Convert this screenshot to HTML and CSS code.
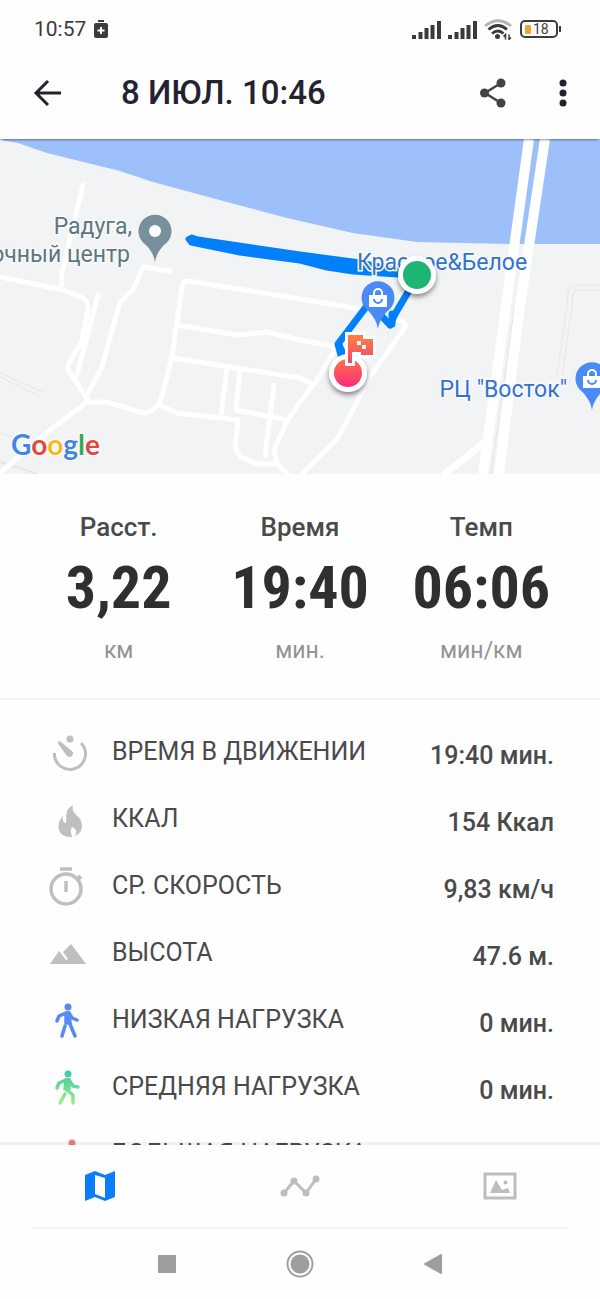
FILE: index.html
```html
<!DOCTYPE html>
<html lang="ru">

<head>
    <meta charset="UTF-8">
    <meta name="viewport" content="width=device-width, initial-scale=1.0">
    <title>8 ИЮЛ. 10:46</title>
    <link rel="stylesheet" href="styles.css">
</head>

<body>
    <div class="app">
        <!-- phone status bar -->
        <div class="status">
            <span>10:57</span>
            <svg width="14" height="18" viewBox="0 0 14 18">
                <path d="M4 0h6v2H4z" fill="#3c3c3e" />
                <rect y="3" width="14" height="15" rx="2" fill="#3c3c3e" />
                <path d="M7 7v7M3.500 10.500h7" stroke="#fff" stroke-width="2" />
            </svg>
            <div class="status-right">
                <svg width="30" height="19" viewBox="0 0 30 19" stroke="#3a3a3a" stroke-width="4">
                    <path d="M2 19v-4M8.500 19v-7M14.500 19v-11M20.500 19v-14M27 19v-18" />
                </svg>
                <svg width="30" height="19" viewBox="0 0 30 19" stroke="#3a3a3a" stroke-width="4">
                    <path d="M2 19v-4M8.500 19v-7M14.500 19v-11M20.500 19v-14M27 19v-18" />
                </svg>
                <svg width="28" height="21" viewBox="0 0 28 21" fill="none" stroke="#3a3a3a" stroke-width="2.800">
                    <path d="M1 7Q14-3.500 27 7" stroke="#b5b5b5" />
                    <path d="M4.500 10.500Q14 2.500 23 10.500M8 14.500Q14 9.500 19.500 14.500" />
                    <circle cx="13.500" cy="17.500" r="2.500" fill="#3a3a3a" stroke="none" />
                    <path d="M21.500 20.500v-5l-2 2M25 15.500v5l2-2" stroke-width="1.500" />
                </svg>
                <div class="battery"><i></i>18</div>
            </div>
        </div>

        <header class="header">
            <button class="icon-btn" aria-label="Назад">
                <svg width="28" height="28" viewBox="0 0 28 28" fill="none" stroke="#25222f" stroke-width="3">
                    <path d="M15 2 3 14l12 12M2.500 14H28" />
                </svg>
            </button>
            <h1>8 ИЮЛ. 10:46</h1>
            <button class="icon-btn share" aria-label="Поделиться">
                <svg width="26" height="30" viewBox="0 0 26 30" fill="#434343">
                    <path d="M21 5 5 15l16 10" fill="none" stroke="#434343" stroke-width="2.500" />
                    <circle cx="21" cy="5" r="4.500" />
                    <circle cx="4.500" cy="15" r="4.500" />
                    <circle cx="21" cy="25" r="4.500" />
                </svg>
            </button>
            <button class="icon-btn" aria-label="Меню">
                <svg width="8" height="28" viewBox="0 0 8 28" fill="#25222f">
                    <circle cx="4" cy="4" r="3.500" />
                    <circle cx="4" cy="14" r="3.500" />
                    <circle cx="4" cy="24" r="3.500" />
                </svg>
            </button>
        </header>

        <svg class="map" viewBox="0 139 600 335" preserveAspectRatio="xMidYMid slice">
            <defs>
                <linearGradient id="finish" x1="0" y1="0" x2="0" y2="1">
                    <stop offset="0" stop-color="#ff7048" />
                    <stop offset="1" stop-color="#fb2d7a" />
                </linearGradient>
                <linearGradient id="flag" x1="0" y1="0" x2="0" y2="1">
                    <stop offset="0" stop-color="#ff8040" />
                    <stop offset="1" stop-color="#f0456e" />
                </linearGradient>
                <filter id="shadow" x="-30%" y="-30%" width="160%" height="170%">
                    <feDropShadow dx="0" dy="3" stdDeviation="2.500" flood-opacity=".45" />
                </filter>
                <g id="shop">
                    <path d="M0 31C-1 24-5 18-9 13.500A16.500 16.500 0 1 1 9 13.500C5 18 1 24 0 31z" fill="#4a8af4" />
                    <path d="M-9-3H9V9H-9z" fill="#fff" />
                    <path d="M-4-3v-2a4 4 0 0 1 8 0v2" fill="none" stroke="#fff" stroke-width="2" />
                    <path d="M-4 1a4 4 0 0 0 8 0" fill="none" stroke="#4a8af4" stroke-width="2" />
                </g>
            </defs>
            <path d="M0 139h600v335H0z" fill="#f1f3f4" />
            <path d="M0 139V140L18 143 47 153 120 171 153 182 227 202 287 218 353 233 417 242 510 244H600V139z" fill="#9dbffa" />

            <!-- faint paths -->
            <g fill="none" stroke="#e4e6e8" stroke-width="1">
                <path d="M0 373 43 392M0 377 41 397M0 433l14 4M557 376l10-70 1-14q2-7 9-7h23M562 376l10-70 1-12q1-4 5-4h22" />
                <path d="M0 462 38 474" stroke-width="2" />
            </g>

            <!-- streets -->
            <g class="street">
                <path d="M83 185 62 272 61 288M0 277 63 290 83 298Q89 302 88 310L82 340 68 365Q67 370 71 374L88 400" />
                <path d="M98 295 77 375M170 271 143 267 133 290 120 302 102 367 87 395M87 395V402" />
                <path d="M0 473 50 430 87 402H107L143 413Q151 412 155 408L160 403 172 357 182 287Q183 281 189 281L300 299 360 309" />
                <path d="M177 325 237 335 267 332 300 340 337 347M173 358 300 378 312 384" />
                <path d="M159 405 177 413 238 420 235 447 240 457 258 464H277L287 473M227 368 221 415M240 370 236 410 287 420M274 385 265 455" />
                <path d="M277 464 274 450 287 421 300 402 317 380 335 350M303 473 338 438 370 377 405 327Q406 321 398 320" />
                <path d="M445 474 485 442" stroke-width="7" />
            </g>
            <path d="M533 244 514 310 491 474" class="median" />
            <path d="M529 139 506 306 483 474M545 139 520 306 499 474" class="highway" />

            <!-- run track -->
            <path d="M188 239 192 237 198 239 300 254 360 262 412 273V276L353 272 327 268 300 261 240 253 191 243z" fill="#0080fb" stroke="#0080fb" stroke-width="5" stroke-linejoin="round" />
            <path d="M417 277 395 314 390 325 378 312M366 307 338 344 341 355" class="track" />
            <path d="M392 314V324M339 345 342 352" class="track" />

            <path d="M155 262C154 255 150 249 146 245A16.500 16.500 0 1 1 164 245C160 249 156 255 155 262z" fill="#78909b" />
            <circle cx="155" cy="231" r="6" fill="#fff" />
            <use href="#shop" x="378" y="298" />
            <use href="#shop" x="592" y="379" />

            <text x="132" y="234" class="place grey">Радуга,</text>
            <text x="130" y="262" class="place grey">очный центр</text>
            <text x="357" y="270" class="place start">Красное&amp;Белое</text>
            <text x="567" y="397" class="place">РЦ "Восток"</text>

            <circle cx="417" cy="275" r="19" fill="#fff" filter="url(#shadow)" />
            <circle cx="417" cy="275" r="14" fill="#1eb574" />
            <circle cx="348" cy="373" r="19" fill="#fff" filter="url(#shadow)" />
            <circle cx="348" cy="373" r="14" fill="url(#finish)" />
            <path d="M348 335H363V339H373V355H361V352H352V363H348z" fill="#fff" stroke="#fff" stroke-width="6" />
            <path d="M348 335H363V339H373V355H361V352H352V363H348z" fill="url(#flag)" />
            <path d="M357 341h4v4h-4zM362 345h4v4h-4z" fill="#fff" />

            <text x="11" y="455" class="google"><tspan fill="#4285e8">G</tspan><tspan fill="#dd4b3e">o</tspan><tspan fill="#f0bd20">o</tspan><tspan fill="#4285e8">g</tspan><tspan fill="#3aa757">l</tspan><tspan fill="#dd4b3e">e</tspan></text>
        </svg>

        <section class="stats">
            <div class="stat">
                <h2>Расст.</h2>
                <strong>3,22</strong>
                <span>км</span>
            </div>
            <div class="stat">
                <h2>Время</h2>
                <strong>19:40</strong>
                <span>мин.</span>
            </div>
            <div class="stat">
                <h2>Темп</h2>
                <strong>06:06</strong>
                <span>мин/км</span>
            </div>
        </section>

        <dl class="details">
            <div class="row">
                <dt>
                    <svg width="40" height="40" viewBox="0 0 40 40" fill="none" stroke="#bfbfbf" stroke-width="3">
                        <path d="M6.500 21A15.500 15.500 0 1 0 33 11" />
                        <circle cx="22" cy="7" r="3.500" fill="#bfbfbf" stroke="none" />
                        <path d="M11 9Q9 11 11 13L19 24Q22 26 24 24 26 21 24 19L13 10Q12 9 11 9z" fill="#bfbfbf" stroke="none" />
                    </svg>
                    ВРЕМЯ В ДВИЖЕНИИ
                </dt>
                <dd>19:40 мин.</dd>
            </div>
            <div class="row">
                <dt>
                    <svg width="40" height="40" viewBox="0 0 40 40" fill="#bfbfbf">
                        <path d="M25 6C23 13 28 15 32 20 36 27 34 34 27 37 30 32 27 29 24 28 22 31 23 34 24 38 13 39 9 31 11 24 12 20 14 18 15 17 14 22 16 24 18 24 19 17 16 11 25 6z" />
                    </svg>
                    ККАЛ
                </dt>
                <dd>154 Ккал</dd>
            </div>
            <div class="row">
                <dt>
                    <svg width="40" height="40" viewBox="0 0 40 40" fill="none" stroke="#bfbfbf" stroke-width="3.500">
                        <circle cx="18" cy="23" r="15" />
                        <path d="M12 3H24M18 15V26M30 10l3 3" />
                    </svg>
                    СР. СКОРОСТЬ
                </dt>
                <dd>9,83 км/ч</dd>
            </div>
            <div class="row">
                <dt>
                    <svg width="40" height="40" viewBox="0 0 40 40" fill="#bfbfbf">
                        <path d="M2 31 11 18 18 27 20 26 15 19 23 11 38 31z" />
                    </svg>
                    ВЫСОТА
                </dt>
                <dd>47.6 м.</dd>
            </div>
            <div class="row">
                <dt>
                    <svg width="40" height="40" viewBox="0 -2 40 40" fill="none" stroke="#568af0" stroke-width="3.500" stroke-linecap="round" stroke-linejoin="round">
                        <circle cx="20" cy="5" r="3.500" fill="#568af0" stroke="none" />
                        <path d="M18 11 11 14 9 19M21 11 24 16 29 18M17 24 14 34M22 22 27 34" />
                        <path d="M18 11H21L22 21H18z" fill="#568af0" />
                    </svg>
                    НИЗКАЯ НАГРУЗКА
                </dt>
                <dd>0 мин.</dd>
            </div>
            <div class="row">
                <dt>
                    <svg width="40" height="40" viewBox="0 -2 40 40" fill="none" stroke="url(#mid)" stroke-width="3.500" stroke-linecap="round" stroke-linejoin="round">
                        <linearGradient id="mid" gradientUnits="userSpaceOnUse" x1="0" y1="2" x2="0" y2="36">
                            <stop offset="0" stop-color="#3cc8a8" />
                            <stop offset="1" stop-color="#a0f080" />
                        </linearGradient>
                        <circle cx="20" cy="5" r="3.500" fill="url(#mid)" stroke="none" />
                        <path d="M18 11 11 14 9 19M21 11 25 17 30 18M17 25 12 34M19 21 25 26 25 34" />
                        <path d="M18 11H21L21 20H17z" fill="url(#mid)" />
                    </svg>
                    СРЕДНЯЯ НАГРУЗКА
                </dt>
                <dd>0 мин.</dd>
            </div>
            <div class="row">
                <dt>
                    <svg width="40" height="40" viewBox="0 0 40 40" fill="none" stroke="#f08070" stroke-width="3.500" stroke-linecap="round" stroke-linejoin="round">
                        <circle cx="24" cy="9" r="3.500" fill="#f08070" stroke="none" />
                        <path d="M22 15 13 17 10 22M22 15 26 21 31 21M22 15 18 25 24 30 22 37M18 25 15 32 8 32" />
                    </svg>
                    БОЛЬШАЯ НАГРУЗКА
                </dt>
                <dd>0 мин.</dd>
            </div>
        </dl>

        <nav class="tabs">
            <button aria-label="Карта">
                <svg width="30" height="30" viewBox="0 0 30 30">
                    <path d="M0 4 10 0 20 4 30 0V26L20 30 10 26 0 30zM10 4V23L20 27V7z" fill="#0a7cff" fill-rule="evenodd" />
                </svg>
            </button>
            <button aria-label="График">
                <svg width="40" height="22" viewBox="0 0 40 22" fill="#bdbdbd">
                    <path d="M4 18 14 6 26 18 36 4" fill="none" stroke="#bdbdbd" stroke-width="3" />
                    <circle cx="4" cy="18" r="3.500" />
                    <circle cx="14" cy="6" r="3.500" />
                    <circle cx="26" cy="18" r="3.500" />
                    <circle cx="36" cy="4" r="3.500" />
                </svg>
            </button>
            <button aria-label="Фото">
                <svg width="34" height="28" viewBox="0 0 34 28" fill="#bdbdbd">
                    <path d="M2 2H32V26H2z" fill="none" stroke="#bdbdbd" stroke-width="3" />
                    <path d="M7 21 13 8 19 18 25 16 27 21z" />
                    <circle cx="22.500" cy="10.500" r="2" />
                </svg>
            </button>
        </nav>

        <!-- android buttons -->
        <div class="system">
            <svg width="18" height="18" viewBox="0 0 18 18"><rect width="18" height="18" rx="1" fill="#9e9e9e" /></svg>
            <svg width="28" height="28" viewBox="0 0 28 28">
                <circle cx="14" cy="14" r="12.500" fill="none" stroke="#9e9e9e" stroke-width="2" />
                <circle cx="14" cy="14" r="9.500" fill="#9e9e9e" />
            </svg>
            <svg width="18" height="20" viewBox="0 0 18 20"><path d="M17 1V19L1 10z" fill="#9e9e9e" stroke="#9e9e9e" stroke-width="2" stroke-linejoin="round" /></svg>
        </div>
    </div>
</body>

</html>
```

FILE: styles.css
```css
* {
    box-sizing: border-box;
}

body {
    margin: 0;
    background-color: #fefefe;
    color: #4a4a4a;
    font-family: Roboto, "Noto Sans", sans-serif;
}

svg {
    display: block;
    flex: none;
}

button {
    padding: 0;
    border: none;
    background: none;
    cursor: pointer;
}

.app {
    display: flex;
    flex-direction: column;
    height: 100vh;
}

.app > * {
    flex: none;
}

.status {
    display: flex;
    align-items: center;
    gap: 8px;
    height: 58px;
    padding: 0 42px 0 34px;
    font-size: 21px;
    color: #3c3c3e;
}

.status-right {
    display: flex;
    align-items: center;
    gap: 6px;
    margin-left: auto;
}

.battery {
    position: relative;
    display: flex;
    align-items: center;
    gap: 2px;
    width: 38px;
    height: 18px;
    margin-left: 2px;
    padding: 0 3px;
    border: 2px solid #3c3c3e;
    border-radius: 5px;
    font-size: 14px;
}

.battery i {
    width: 6px;
    height: 9px;
    border-radius: 1px;
    background-color: #f0a232;
}

.battery::after {
    content: "";
    position: absolute;
    right: -5px;
    top: 4px;
    width: 2px;
    height: 6px;
    background-color: #3c3c3e;
}

.header {
    position: relative;
    display: flex;
    align-items: center;
    height: 81px;
    padding: 0 33px 12px;
    box-shadow: 0 3px 2px -2px rgba(0, 0, 0, 0.4);
}

.header h1 {
    margin: 0 auto 0 60px;
    font-size: 33px;
    font-weight: 500;
    line-height: 40px;
    color: #25222f;
}

.share {
    margin-right: 53px;
}

.map {
    width: 100%;
    height: 335px;
}

.street {
    fill: none;
    stroke: #fff;
    stroke-width: 5;
    stroke-linejoin: round;
    stroke-linecap: round;
}

.highway {
    fill: none;
    stroke: #fff;
    stroke-width: 10;
}

.median {
    fill: none;
    stroke: #e3e6ea;
    stroke-width: 1;
}

.track {
    fill: none;
    stroke: #0080fb;
    stroke-width: 7;
    stroke-linejoin: round;
    stroke-linecap: round;
}

.place {
    font-size: 23px;
    fill: #3472cf;
    stroke: #f8fafb;
    stroke-width: 3;
    paint-order: stroke;
    text-anchor: end;
}

.place.start {
    text-anchor: start;
}

.place.grey {
    fill: #5f7680;
}

.google {
    font-family: Lato, sans-serif;
    font-size: 28px;
    font-weight: 700;
    stroke: #fff;
    stroke-width: 2;
    paint-order: stroke;
}

.stats {
    display: grid;
    grid-template-columns: repeat(3, 1fr);
    padding: 36px 28px 32px;
    border-bottom: 2px solid #f3f3f3;
    text-align: center;
}

.stat h2 {
    margin: 0;
    font-size: 26px;
    font-weight: 500;
    line-height: 34px;
}

.stat strong {
    display: block;
    font-family: "Roboto Condensed", "Liberation Sans Narrow", sans-serif;
    font-size: 60px;
    line-height: 88px;
    color: #2f2f30;
}

.stat span {
    display: block;
    margin-top: 4px;
    font-size: 23px;
    line-height: 30px;
    color: #929292;
}

.app .details {
    flex: 1;
    min-height: 0;
    margin: 0;
    padding: 22px 46px 0;
    overflow: hidden;
}

.row {
    display: flex;
    align-items: center;
    justify-content: space-between;
    height: 67px;
}

.row dt {
    display: flex;
    align-items: center;
    gap: 24px;
    margin: 0 0 8px 2px;
    font-size: 25px;
}

.row dd {
    margin: 0;
    font-size: 25px;
    font-weight: 500;
}

.tabs {
    position: relative;
    display: grid;
    grid-template-columns: repeat(3, 1fr);
    height: 82px;
    box-shadow: 0 -3px 0 rgba(0, 0, 0, 0.05);
}

.tabs button {
    display: flex;
    align-items: center;
    justify-content: center;
}

.system {
    display: flex;
    align-items: center;
    justify-content: center;
    gap: 110px;
    height: 72px;
    margin: 0 32px;
    border-top: 2px solid #f3f3f3;
}
```
